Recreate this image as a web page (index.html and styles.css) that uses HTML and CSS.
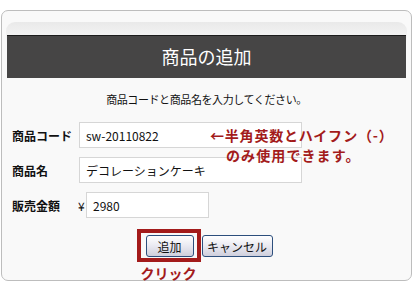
FILE: index.html
```html
<!DOCTYPE html>
<html lang="ja">
<head>
<meta charset="utf-8"/>
<meta content="width=device-width, initial-scale=1.0" name="viewport"/>
<title>商品の追加</title>
<link rel="stylesheet" href="styles.css">
</head>
<body>
<div class="box">
  <div class="panel">
    <h1 class="title">商品の追加</h1>
    <p class="lead">商品コードと商品名を入力してください。</p>
    <form class="form">
      <div class="row">
        <label class="label" for="code">商品コード</label>
        <input class="field" id="code" type="text" value="sw-20110822"/>
      </div>
      <p class="note">
        <span class="note-line">←半角英数とハイフン（-）</span>
        <span class="note-line note-sub">のみ使用できます。</span>
      </p>
      <div class="row">
        <label class="label" for="name">商品名</label>
        <input class="field" id="name" type="text" value="デコレーションケーキ"/>
      </div>
      <div class="row">
        <label class="label" for="price">販売金額</label>
        <span class="yen">¥</span>
        <input class="field field-price" id="price" type="text" value="2980"/>
      </div>
      <div class="actions">
        <span class="mark">
          <button class="btn btn-add" type="button">追加</button>
          <span class="mark-label">クリック</span>
        </span>
        <button class="btn btn-cancel" type="button">キャンセル</button>
      </div>
    </form>
  </div>
</div>
</body>
</html>
```

FILE: styles.css
```css
/* 商品の追加フォーム */
body {
    margin: 0;
    background-color: #fff;
    color: #111;
    font-family: "Noto Sans CJK JP", "Noto Sans", sans-serif;
    font-size: 12px;
}

.box {
    box-sizing: border-box;
    height: 271px;
    margin: 10px 2px 0 1px;
    padding: 11px 4px 0;
    border: 1px solid #bdbdbd;
    border-radius: 7px;
    background-color: #f9f9f9;
}

.panel {
    padding: 13px 1px 0;
    border-radius: 9px 9px 0 0;
    background: linear-gradient(#e9e9e9, #f9f9f9 22px);
}

.title {
    box-sizing: border-box;
    height: 43px;
    margin: 0;
    border-top: 1px solid #1c1c1c;
    background-color: #464545;
    color: #fff;
    font-size: 18px;
    font-weight: normal;
    line-height: 41px;
    text-align: center;
}

.lead {
    margin: 13px 0 0;
    font-size: 11px;
    line-height: 16px;
    letter-spacing: -0.4px;
    text-align: center;
}

.form {
    position: relative;
    display: flex;
    flex-direction: column;
    gap: 9px;
    margin-top: 15px;
    padding-left: 5px;
}

.row {
    display: flex;
    align-items: center;
}

.label {
    width: 67px;
    font-weight: bold;
    font-size: 12px;
}

.field {
    box-sizing: border-box;
    width: 223px;
    height: 26px;
    margin: 0;
    padding: 0 6px;
    border: 1px solid #d6d6d6;
    background-color: #fff;
    color: #111;
    font-family: inherit;
    font-size: 12px;
}

.yen {
    width: 8px;
    margin-left: -1px;
}

.field-price {
    width: 123px;
}

.note {
    position: absolute;
    top: 3px;
    left: 203px;
    margin: 0;
    color: #a31b1b;
    font-size: 14px;
    font-weight: bold;
    line-height: 20px;
    letter-spacing: 0.8px;
    white-space: nowrap;
}

.note-line {
    display: block;
}

.note-sub {
    padding-left: 16px;
    letter-spacing: 1.1px;
}

.actions {
    display: flex;
    justify-content: center;
    gap: 8px;
    margin-top: 8px;
}

.mark {
    position: relative;
    display: inline-block;
}

.mark::before {
    content: "";
    position: absolute;
    top: -6px;
    left: -9px;
    right: -7px;
    bottom: -5px;
    border: 4px solid #a31b1b;
}

.mark-label {
    position: absolute;
    top: 30px;
    left: -9px;
    right: -7px;
    color: #a31b1b;
    font-size: 14px;
    font-weight: bold;
    line-height: 16px;
    text-align: center;
    white-space: nowrap;
}

.btn {
    display: block;
    height: 22px;
    margin: 0;
    padding: 0;
    border: 1px solid #2d4f7d;
    border-radius: 3px;
    background: linear-gradient(#ffffff, #e9e9f1 50%, #cfcfdc);
    color: #111;
    font-family: inherit;
    font-size: 12px;
    cursor: pointer;
}

.btn-add {
    width: 48px;
}

.btn-cancel {
    width: 71px;
}
```
